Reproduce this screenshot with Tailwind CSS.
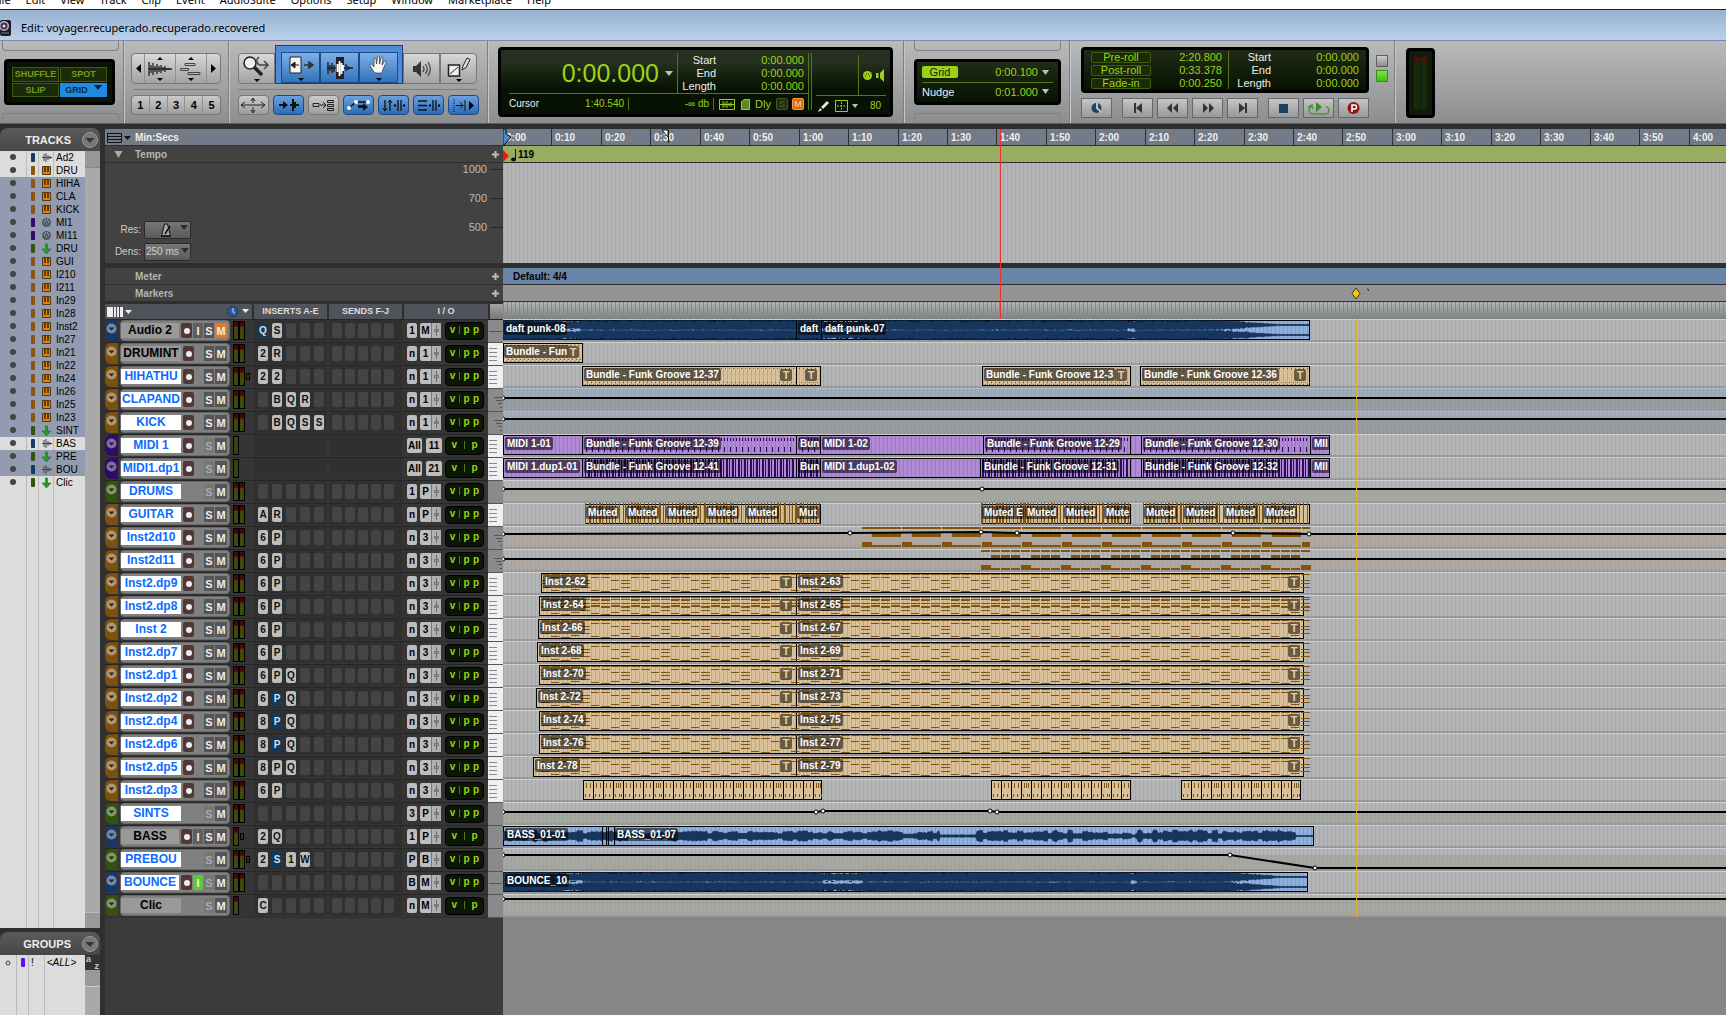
<!DOCTYPE html>
<html lang="en">
  <head>
    <meta charset="UTF-8" />
    <meta name="viewport" content="width=device-width, initial-scale=1.0" />
    <title>Edit: voyager.recuperado.recuperado.recovered</title>
    <script src="https://cdn.jsdelivr.net/npm/@tailwindcss/browser@4"></script>
  </head>

  <body class="flex flex-col min-h-screen overflow-x-hidden bg-[#2f2f2f] font-['Liberation_Sans',Arial,sans-serif] text-[10px] leading-3 text-black whitespace-nowrap">
    <!-- Menu bar -->
    <nav class="flex items-end gap-[15px] h-[10px] pb-px -ml-[7px] overflow-hidden bg-white border-b border-[#222] font-['Noto_Sans',sans-serif] text-[11px] leading-4">
      <a href="#">File</a><a href="#">Edit</a><a href="#">View</a><a href="#">Track</a><a href="#">Clip</a>
      <a href="#">Event</a><a href="#">AudioSuite</a><a href="#">Options</a><a href="#">Setup</a>
      <a href="#">Window</a><a href="#">Marketplace</a><a href="#">Help</a>
    </nav>

    <!-- Title bar -->
    <header class="flex items-center gap-[10px] h-[31px] pt-[6px] bg-linear-to-b from-[#98b1cf] to-[#b9d1ec] border-b border-[#8684a8] font-['Noto_Sans',sans-serif] text-[11px]">
      <svg width="11" height="16" viewBox="0 0 11 16"><rect width="11" height="16" rx="2" fill="#1d1a26"/><circle cx="4" cy="6" r="5" fill="#b9b4c8"/><circle cx="4" cy="6" r="3.500" fill="#3b3350"/><circle cx="4" cy="6" r="1.500" fill="#ddd"/><path d="M1 13h8" stroke="#777"/></svg>
      <h1>Edit: voyager.recuperado.recuperado.recovered</h1>
    </header>

    <!-- Toolbar -->
    <div class="flex h-[83px] bg-linear-to-b from-[#b9babc] to-[#8d8e90] border-b border-[#5b5b63]">
      <!-- Edit modes -->
      <section class="flex flex-col justify-between w-[124px] shrink-0 pl-0.5 pr-1 border-r border-[#7d7e80]">
        <div class="h-[10px] rounded-b border border-t-0 border-[#7f8082]"></div>
        <div class="grid grid-cols-2 gap-px h-[46px] ml-0.5 mr-1 p-[5px] rounded border-3 border-black bg-[#0b1404] text-[#6f9e1a] font-bold text-[9px]">
          <button class="border border-[#3f5c12] bg-[#1b2b08]">SHUFFLE</button>
          <button class="border border-[#3f5c12] bg-[#1b2b08]">SPOT</button>
          <button class="border border-[#3f5c12] bg-[#1b2b08]">SLIP</button>
          <button class="flex items-center justify-center gap-1.5 bg-[#1e8be0] text-[#0c2a4a]">GRID <svg class="mb-1" width="8" height="5"><path d="M0 0h8l-4 5z" fill="#0a1d33"/></svg></button>
        </div>
        <div class="h-[10px] rounded-t border border-b-0 border-[#7f8082]"></div>
      </section>

      <!-- Zoom presets -->
      <section class="w-[105px] shrink-0 pt-3 pl-[6px] pr-2 border-r border-[#7d7e80] border-l border-l-[#c6c7c9]">
        <div class="flex h-[31px] w-[90px] rounded-sm border border-[#77787a] bg-linear-to-b from-[#d8d8d8] to-[#a2a2a2] divide-x divide-[#909090]">
          <button class="grid place-items-center w-[13px]" aria-label="Zoom out"><svg width="5" height="9"><path d="M5 0v9L0 4.500z"/></svg></button>
          <button class="grid place-items-center w-[31px]" aria-label="Audio zoom"><svg width="24" height="24" viewBox="0 0 24 24"><path d="M12 0l3 3H9zM12 24l3-3H9z"/><path d="M1 5v14M3 8v8M5 6v12M7 9v6M9 7v10M11 9v6M13 8v8M15 10v4M17 9v6M19 11v2M21 11v2M1 12h23" stroke="#222" stroke-width="1.300"/></svg></button>
          <button class="grid place-items-center w-[31px]" aria-label="MIDI zoom"><svg width="24" height="24" viewBox="0 0 24 24"><path d="M12 0l3 3H9zM12 24l3-3H9z"/><path d="M6 6.500h10v2H6zM1.500 11.500h8v2h-8zM9 15.500h12v2H9z" fill="none" stroke="#444"/></svg></button>
          <button class="grid place-items-center w-[13px]" aria-label="Zoom in"><svg width="5" height="9"><path d="M0 0v9l5-4.500z"/></svg></button>
        </div>
        <div class="h-[6px] w-[86px] mx-0.5 border-b border-[#7d7e80]"></div>
        <div class="flex h-5 w-[90px] mt-[5px] rounded-sm border border-[#77787a] bg-linear-to-b from-[#cacaca] to-[#9e9e9e] divide-x divide-[#909090] font-bold text-[11px]">
          <button class="flex-1">1</button><button class="flex-1">2</button><button class="flex-1">3</button><button class="flex-1">4</button><button class="flex-1">5</button>
        </div>
      </section>

      <!-- Edit tools -->
      <section class="w-[259px] shrink-0 pt-1 pl-2 border-r border-[#7d7e80] border-l border-l-[#c6c7c9]">
        <div class="flex items-end h-[39px]">
          <button class="grid place-items-center w-[37px] h-[31px] rounded-l-sm border border-[#77787a] bg-linear-to-b from-[#d8d8d8] to-[#a2a2a2]" aria-label="Zoomer">
            <svg width="30" height="28" viewBox="0 0 30 28"><path d="M12 12l8 8" stroke="#222" stroke-width="3.500"/><circle cx="8" cy="8" r="6" fill="#eee" stroke="#222" stroke-width="1.500"/><path d="M17 2c-4 3-2 8 2 8h6M22 6l4 4-4 4" fill="none" stroke="#444" stroke-width="1.500"/><path d="M12 24h6l-3 3z"/></svg>
          </button>
          <div class="flex items-end w-[128px] h-[39px] pl-[5px] pr-1 border border-[#1d3f73] bg-[#4f8bd6]">
            <button class="grid place-items-center w-[39px] h-[31px] border border-[#1d4a86] bg-linear-to-b from-[#7db1ea] to-[#3072b8]" aria-label="Trim">
              <svg width="26" height="26" viewBox="0 0 26 26"><path d="M2 2h11v16H2z" fill="#f4f4f4" stroke="#222"/><path d="M11 10H6M7 7l-4 3 4 3z" fill="#222" stroke="#222"/><path d="M16 10h5M21 7l4 3-4 3z" fill="#333" stroke="#333" stroke-width="1.500"/><path d="M10 23h6l-3 3z"/></svg>
            </button>
            <button class="grid place-items-center w-[39px] h-[31px] border border-[#1d4a86] bg-linear-to-b from-[#7db1ea] to-[#3072b8]" aria-label="Selector">
              <svg width="26" height="24" viewBox="0 0 26 24"><path d="M9 1h8v22H9z" fill="#222"/><path d="M1 6v12M3 9v6M5 7v10M7 9v7M19 8v7M21 10v4M23 11v2M0 12h26" stroke="#222" stroke-width="1.400"/><path d="M10.500 8v8M12.500 5v15M14.500 7v11M16 9v6" stroke="#fff" stroke-width="1.800"/></svg>
            </button>
            <button class="grid place-items-center w-[39px] h-[31px] border border-[#1d4a86] bg-linear-to-b from-[#7db1ea] to-[#3072b8]" aria-label="Grabber">
              <svg width="20" height="26" viewBox="0 0 20 26"><path d="M5 17L1 10.500c-.5-1 1-2 2-1l2 2.500V4c0-1.500 2-1.500 2 0l.5 5L8.500 2c0-1.500 2-1.500 2 0v7l1.500-6c.3-1.400 2.200-1 2 .5L13 10l2.500-3.500c.8-1.200 2.300-.3 1.700 1L14 14l-1 4H6z" fill="#f6f6f6" stroke="#333" stroke-width=".7"/><path d="M7 23h6l-3 3z"/></svg>
            </button>
          </div>
          <button class="grid place-items-center w-[37px] h-[31px] border border-[#77787a] bg-linear-to-b from-[#d8d8d8] to-[#a2a2a2]" aria-label="Scrubber">
            <svg width="20" height="20" viewBox="0 0 20 20"><path d="M1 7h3l5-5v16l-5-5H1z" fill="#333"/><path d="M11 7q2 3 0 6M13.500 5q3.500 5 0 10M16 3q4.500 7 0 14" fill="none" stroke="#444" stroke-width="1.300"/></svg>
          </button>
          <button class="grid place-items-center w-[37px] h-[31px] rounded-r-sm border border-[#77787a] bg-linear-to-b from-[#d8d8d8] to-[#a2a2a2]" aria-label="Pencil">
            <svg width="26" height="26" viewBox="0 0 26 26"><path d="M2.500 9h11v11h-11z" fill="#eee" stroke="#222" stroke-width="1.500"/><path d="M4 18l8-7" stroke="#222"/><path d="M16 14l1-4 4-8 3 1.500-4 8z" fill="#ddd" stroke="#222"/><path d="M10 23h6l-3 3z"/></svg>
          </button>
        </div>
        <div class="h-[6px] w-[239px] border-b border-[#7d7e80]"></div>
        <div id="options" class="flex gap-1 mt-[5px]"></div>
      </section>

      <!-- Main counter -->
      <section class="w-[416px] shrink-0 pt-1.5 pl-[9px] border-r border-[#7d7e80] border-l border-l-[#c6c7c9]">
        <div class="flex w-[395px] h-[70px] px-1 pt-[3px] pb-1 rounded border-3 border-black bg-linear-to-b from-[#26301e] from-20% to-[#081203] to-60% text-[#9ad316]">
          <div class="flex flex-col w-[304px] border-r border-[#54761a] mr-0.5">
            <div class="flex h-[43px] ml-1 border-b border-[#54761a]">
              <div class="flex items-center justify-end gap-1.5 w-[169px] pr-1 border-r border-[#54761a] text-[25px]">
                <span>0:00.000</span><svg width="8" height="5"><path d="M0 0h8l-4 5z" fill="#b9c4b9"/></svg>
              </div>
              <dl class="grid grid-cols-[38px_1fr] flex-1 pr-1 text-right text-[11px] leading-[13px] content-center">
                <dt class="text-[#eee]">Start</dt><dd>0:00.000</dd>
                <dt class="text-[#eee]">End</dt><dd>0:00.000</dd>
                <dt class="text-[#eee]">Length</dt><dd>0:00.000</dd>
              </dl>
            </div>
            <div class="flex items-center flex-1 pt-1 pl-1">
              <span class="text-[#eee]">Cursor</span>
              <span class="w-[90px] pr-1 border-r border-[#54761a] text-right">1:40.540</span>
              <span class="w-[85px] pr-1 border-r border-[#54761a] text-right">-∞ db</span>
              <svg class="ml-[5px]" width="16" height="11"><path d="M.5.500h15v10H.5z" fill="none" stroke="#9ad316"/><path d="M1 5.500h14M4 2v7M6 3v5M8 2v7M10 4v3M12 3v5" stroke="#9ad316"/></svg>
              <svg class="ml-1.5" width="9" height="11"><path d="M3 0h6v11H0V3z" fill="#5f8a1c"/><path d="M3 .5h5.500v10H.5V3z" fill="none" stroke="#9ad316"/></svg>
              <span class="ml-[5px] text-[11px]">Dly</span>
              <button class="ml-[5px] w-3 h-3 rounded-xs border border-[#3e5a1a] bg-[#1f2e12] text-[9px] leading-[10px] text-[#47661e]">S</button>
              <button class="ml-1 w-3 h-3 rounded-xs border border-[#ff9a3a] bg-[#d96a0a] text-[9px] leading-[10px] text-[#ffd9a8]">M</button>
            </div>
          </div>
          <div class="flex flex-col flex-1 border-l border-[#54761a]">
            <div class="flex justify-end h-[43px] ml-1 border-b border-[#54761a]">
              <div class="flex items-center gap-1 w-7 h-10 pl-1 mt-0.5 border-l border-[#54761a]">
                <svg width="9" height="9"><circle cx="4.500" cy="4.500" r="4.500" fill="#9ad316"/><path d="M2 5h1M3 3h1M5 3h1M6 5h1" stroke="#12200a"/></svg>
                <svg width="8" height="13"><path d="M0 4h2.500v5H0zM4 4l4-4v13l-4-4z" fill="#9ad316"/></svg>
              </div>
            </div>
            <div class="flex items-center flex-1 pt-1 pl-1.5">
              <svg width="11" height="11"><path d="M0 11l2-4 2 2zM3 6l6-6 2 2-6 6z" fill="#e6e6e6"/></svg>
              <svg class="ml-1.5" width="13" height="12"><path d="M.5.500h12v11H.5z" fill="none" stroke="#9ad316"/><path d="M6.500 2v8M2 6h9" fill="none" stroke="#9ad316" stroke-dasharray="2 1"/></svg>
              <svg class="ml-1" width="6" height="4"><path d="M0 0h6l-3 4z" fill="#b9c4b9"/></svg>
              <span class="ml-3">80</span>
            </div>
          </div>
        </div>
      </section>

      <!-- Grid and nudge -->
      <section class="flex flex-col justify-between w-[166px] shrink-0 pl-[9px] pr-2 border-r border-[#7d7e80] border-l border-l-[#c6c7c9]">
        <div class="h-[10px] rounded-b border border-t-0 border-[#7f8082]"></div>
        <div class="h-[46px] px-[5px] py-1 rounded border-3 border-black bg-linear-to-b from-[#202b18] to-[#081203] text-[11px] text-[#9ad316]">
          <div class="flex items-center h-[17px] border-b border-[#54761a]">
            <button class="w-[36px] h-[12px] mb-1 rounded-xs bg-[#9ad316] leading-[11px] text-[#16250a]">Grid</button>
            <span class="flex-1 pr-1 mb-1 text-right">0:00.100</span><svg class="mb-1 mr-1" width="7" height="5"><path d="M0 0h7l-3.500 5z" fill="#b9c4b9"/></svg>
          </div>
          <div class="flex items-center h-[17px]">
            <span class="text-[#eee]">Nudge</span>
            <span class="flex-1 pr-1 text-right">0:01.000</span><svg class="mr-1" width="7" height="5"><path d="M0 0h7l-3.500 5z" fill="#b9c4b9"/></svg>
          </div>
        </div>
        <div class="h-[10px] rounded-t border border-b-0 border-[#7f8082]"></div>
      </section>

      <!-- Transport -->
      <section class="flex w-[325px] shrink-0 pt-1.5 pl-[10px] border-r border-[#7d7e80] border-l border-l-[#c6c7c9]">
        <div class="w-[288px]">
          <div class="flex h-[46px] px-[5px] py-px rounded border-3 border-black bg-linear-to-b from-[#202b18] to-[#081203] text-[11px] text-[#9ad316]">
            <div class="grid grid-cols-[60px_1fr] w-[140px] items-center gap-y-px pl-0.5 pr-1.5 text-right border-r border-[#54761a]">
              <button class="h-[11px] rounded-xs border border-[#3f5c12] bg-[#1b2b08] leading-[9px]">Pre-roll</button><span>2:20.800</span>
              <button class="h-[11px] rounded-xs border border-[#3f5c12] bg-[#1b2b08] leading-[9px]">Post-roll</button><span>0:33.378</span>
              <button class="h-[11px] rounded-xs border border-[#3f5c12] bg-[#1b2b08] leading-[9px]">Fade-in</button><span>0:00.250</span>
            </div>
            <dl class="grid grid-cols-[42px_1fr] flex-1 items-center pr-0.5 text-right">
              <dt class="text-[#eee]">Start</dt><dd>0:00.000</dd>
              <dt class="text-[#eee]">End</dt><dd>0:00.000</dd>
              <dt class="text-[#eee]">Length</dt><dd>0:00.000</dd>
            </dl>
          </div>
          <div id="transport" class="flex mt-[5px]"></div>
        </div>
        <div class="flex flex-col gap-[3px] pt-2 pl-[7px]">
          <button class="w-3 h-3 border border-[#5e5e5e] bg-linear-to-b from-[#ccc] to-[#8c8c8c]" aria-label="Count off"></button>
          <button class="w-3 h-3 border border-[#3c8a1c] bg-linear-to-b from-[#7ee04e] to-[#3fc000]" aria-label="Metronome"></button>
        </div>
      </section>

      <!-- Output meter -->
      <section class="flex-1 pt-[7px] pl-[10px] border-l border-[#c6c7c9]">
        <div class="flex justify-center gap-px w-[29px] h-[70px] py-1.5 rounded border-[3px] border-black bg-[#101a0c]">
          <div class="w-1.5 border-t-4 border-[#5a0a0a] bg-[#182a0c]"></div>
          <div class="w-1.5 border-t-4 border-[#5a0a0a] bg-[#182a0c]"></div>
        </div>
      </section>
    </div>

    <main class="flex flex-1">
      <!-- Track and group lists -->
      <aside class="flex flex-col w-[100px] shrink-0 pt-1">
        <div class="flex items-center justify-end gap-[11px] h-[23px] pr-0.5 rounded-t-lg bg-linear-to-b from-[#5b5b5b] to-[#474747] text-[11px] font-bold text-[#eee]">
          TRACKS
          <button aria-label="Tracks menu"><svg width="16" height="16"><circle cx="8" cy="8" r="7.500" fill="#777" stroke="#999"/><path d="M3.500 6h9L8 11z" fill="#333"/></svg></button>
        </div>
        <div class="flex h-[777px]">
          <ul id="trackList" class="w-[85px] bg-[linear-gradient(90deg,#dcdcdc_26px,#bbb_26px_27px,#dcdcdc_27px_38px,#bbb_38px_39px,#dcdcdc_39px_53px,#bbb_53px_54px,#dcdcdc_54px)]"></ul>
          <div class="flex flex-col justify-between flex-1 bg-[#a9a9a9]">
            <div class="h-[17px] bg-[#979797] border-b border-[#888]"></div>
            <div class="h-4 bg-[#999] border-t border-[#bbb]"></div>
          </div>
        </div>
        <div class="flex items-center justify-end gap-[11px] h-[23px] mt-1 pr-0.5 rounded-t-lg bg-linear-to-b from-[#5b5b5b] to-[#474747] text-[11px] font-bold text-[#eee]">
          GROUPS
          <button aria-label="Groups menu"><svg width="16" height="16"><circle cx="8" cy="8" r="7.500" fill="#777" stroke="#999"/><path d="M3.500 6h9L8 11z" fill="#333"/></svg></button>
        </div>
        <div class="flex flex-1">
          <div class="w-[85px] pt-px bg-[linear-gradient(90deg,#dcdcdc_16px,#bbb_16px_17px,#dcdcdc_17px_28px,#bbb_28px_29px,#dcdcdc_29px_44px,#bbb_44px_45px,#dcdcdc_45px)]">
            <div class="flex items-center h-[13px]">
              <svg width="31" height="11"><circle cx="8" cy="6" r="2" fill="none" stroke="#444"/><rect x="21" y="1" width="4" height="9" rx="1" fill="#5a10f0"/></svg>
              <span>!</span><span class="ml-[13px] italic">&lt;ALL&gt;</span>
            </div>
          </div>
          <div class="flex-1 bg-[#a9a9a9]">
            <button class="relative block w-full h-[15px] bg-[#333] text-[9px] leading-[8px] font-bold text-[#ccc]" aria-label="Sort groups"><span class="absolute left-px top-0">a</span><span class="absolute right-px bottom-0">z</span></button>
            <div class="h-[17px] bg-[#999] border-b border-[#ccc]"></div>
          </div>
        </div>
      </aside>

      <!-- Ruler headings and track controls -->
      <section class="flex flex-col w-[398px] shrink-0 ml-[5px] pt-[5px] font-bold">
        <div class="flex items-center h-4 mb-px pt-px pl-0.5 bg-[#727b87] text-[#eee]">
          <svg width="28" height="10"><path d="M.5.500h14v9H.5zM0 3.500h14M0 6.500h14" fill="none" stroke="#111"/><path d="M17 3h7l-3.500 4z" fill="#111"/></svg>Min:Secs
        </div>
        <div class="flex items-center h-4 mb-px pt-px pl-[9px] pr-1 bg-[#424242] text-[#b5b5b5]">
          <svg width="21" height="8"><path d="M.5 0h8l-4 7z" fill="#aaa"/></svg><span class="flex-1">Tempo</span>
          <svg width="7" height="7"><path d="M3.500 0v7M0 3.500h7" stroke="#bbb" stroke-width="2"/></svg>
        </div>
        <div class="relative h-[100px] mb-[5px] bg-[#424242] text-[#bbb] font-normal">
          <div class="absolute left-0 top-[58px] grid grid-cols-[36px_47px] gap-x-[3px] gap-y-1 items-center text-right text-[#ccc]">
            <span>Res:</span>
            <button class="flex items-center justify-end gap-2 h-[18px] pr-0.5 rounded-xs border border-[#2a2a2a] bg-linear-to-b from-[#777] to-[#5a5a5a]" aria-label="Tempo resolution"><svg width="12" height="14"><path d="M4.500 1h3l3 12h-9z" fill="#aaa" stroke="#111"/><path d="M5 11l5-8M1 13h10" fill="none" stroke="#111" stroke-width="1.500"/></svg><svg class="mb-1.5" width="8" height="5"><path d="M0 0h8l-4 5z" fill="#2c2c2c"/></svg></button>
            <label for="dens">Dens:</label>
            <div class="relative">
              <select id="dens" class="block w-full h-[18px] pl-px appearance-none rounded-xs border border-[#2a2a2a] bg-linear-to-b from-[#777] to-[#5a5a5a] text-[#ccc]"><option>250 ms</option></select>
              <svg class="absolute right-0.5 top-[5px] pointer-events-none" width="8" height="5"><path d="M0 0h8l-4 5z" fill="#2c2c2c"/></svg>
            </div>
          </div>
          <div class="absolute right-0 top-0 flex flex-col items-end gap-[17px] text-[11px]">
            <span class="flex items-center gap-1">1000<i class="w-3 h-px bg-[#222]"></i></span>
            <span class="flex items-center gap-1">700<i class="w-3 h-px bg-[#222]"></i></span>
            <span class="flex items-center gap-1">500<i class="w-3 h-px bg-[#222]"></i></span>
          </div>
        </div>
        <div class="flex items-center h-4 mb-px pt-px pl-[30px] pr-1 bg-[#424242] text-[#b5b5b5]"><span class="flex-1">Meter</span><svg width="7" height="7"><path d="M3.500 0v7M0 3.500h7" stroke="#bbb" stroke-width="2"/></svg></div>
        <div class="flex items-center h-4 mb-[3px] pt-px pl-[30px] pr-1 bg-[#424242] text-[#b5b5b5]"><span class="flex-1">Markers</span><svg width="7" height="7"><path d="M3.500 0v7M0 3.500h7" stroke="#bbb" stroke-width="2"/></svg></div>
        <div class="flex gap-0.5 h-[15px] text-[9px] text-center text-[#ddd]">
          <div class="flex items-center justify-between w-[147px] px-0.5 bg-[#50545a]">
            <svg width="25" height="10"><path d="M0 0h16v10H0z" fill="#eee"/><path d="M6.500 0v10M9.500 0v10M12.500 0v10" stroke="#444"/><path d="M18 3h7l-3.500 4z" fill="#eee"/></svg>
            <svg width="23" height="11"><circle cx="6" cy="5.500" r="5" fill="#2f5c9e" stroke="#16305a"/><path d="M6 2v4l2 1.500" fill="none" stroke="#ddd"/><path d="M15 3h7l-3.500 4z" fill="#eee"/></svg>
          </div>
          <div class="w-[73px] pt-px bg-[#50545a]">INSERTS A-E</div>
          <div class="w-[73px] pt-px bg-[#50545a]">SENDS F-J</div>
          <div class="w-[84px] pt-px bg-[#50545a]">I / O</div>
          <div class="flex-1 bg-linear-to-b from-[#a5a5a5] to-[#777]"></div>
        </div>
        <div id="strips"></div>
        <div class="flex-1 mt-px rounded-tl bg-[#3b3b3b]"></div>
      </section>

      <!-- Timeline -->
      <section class="relative flex flex-col flex-1 min-w-0 overflow-hidden pt-[5px] font-bold">
        <div id="ruler" class="relative h-4 mb-px bg-[#727b87] text-[#eee]"></div>
        <div class="flex items-center h-4 mb-px pt-px bg-[#98ad62]">
          <svg width="13" height="16"><path d="M0 3l6 6-6 6z" fill="#f01c00"/><path d="M12.500 2v10" stroke="#111"/><ellipse cx="10.500" cy="12.500" rx="2.500" ry="2" fill="#111"/></svg><span class="ml-0.5">119</span>
        </div>
        <div class="h-[100px] mb-[5px] bg-[repeating-linear-gradient(90deg,#a0abaf_0_1px,#b4b5b7_1px_4px)]"></div>
        <div class="h-4 mb-px pt-[3px] pl-[10px] bg-[#6884a6]">Default: 4/4</div>
        <div class="relative h-4 mb-px bg-[#949494]">
          <svg class="absolute left-[848px] top-[3px]" width="18" height="11"><path d="M5 0l4 5.500-4 5.500-4-5.500z" fill="#ffc400" stroke="#333"/><path d="M16 1l2 1v1" stroke="#222" fill="none"/></svg>
        </div>
        <div class="h-[17px] bg-[repeating-linear-gradient(90deg,#7b8b92_0_1px,transparent_1px_4px),linear-gradient(#b0b2b4,#7e8182)]"></div>
        <div id="lanes" class="bg-[repeating-linear-gradient(90deg,#a0abaf_0_1px,#b4b5b7_1px_4px)]"></div>
        <div class="flex-1 bg-[#868686]"></div>
        <div class="absolute left-[497px] top-[5px] w-px h-[190px] bg-[#f03028]"></div>
        <div class="absolute left-[853px] top-[195px] w-px h-[598px] bg-[#e0b030]"></div>
      </section>
    </main>

    <script>
      const COLORS = {
        blue: "bg-[#183766]", brown: "bg-[#7d500f]", purple: "bg-[#300a66]", green: "bg-[#33510f]",
      };
      const I = (name, short, ins, io, extra) =>
        Object.assign({ name, short, color: "brown", type: "inst", ins, io, sel: true, keys: "midi" }, extra);

      // ins: one character per insert slot, lower case means bypassed/blue
      const tracks = [
        I("Audio 2", "Ad2", "qS", "1M", { color: "blue", type: "audio", sel: false, keys: "line", mon: true, muted: true }),
        I("DRUMINT", "DRU", "2R", "n1", { sel: false }),
        I("HIHATHU", "HIHA", "22", "n1", { clip: "ml-px" }),
        I("CLAPAND", "CLA", " BQR", "n1", { keys: "auto" }),
        I("KICK", "KICK", " BQSS", "n1", { keys: "auto" }),
        I("MIDI 1", "MI1", null, "11", { color: "purple", type: "midi" }),
        I("MIDI1.dp1", "MI11", null, "21", { color: "purple", type: "midi" }),
        I("DRUMS", "DRU", "", "1P", { color: "green", type: "aux", keys: "" }),
        I("GUITAR", "GUI", "AR", "nP"),
        I("Inst2d10", "I210", "6P", "n3", { keys: "auto" }),
        I("Inst2d11", "I211", "6P", "n3", { keys: "auto" }),
        I("Inst2.dp9", "In29", "6P", "n3"),
        I("Inst2.dp8", "In28", "6P", "n3"),
        I("Inst 2", "Inst2", "6P", "n3"),
        I("Inst2.dp7", "In27", "6P", "n3"),
        I("Inst2.dp1", "In21", "6PQ", "n3"),
        I("Inst2.dp2", "In22", "6pQ", "n3"),
        I("Inst2.dp4", "In24", "8pQ", "n3"),
        I("Inst2.dp6", "In26", "8pQ", "n3"),
        I("Inst2.dp5", "In25", "8PQ", "n3"),
        I("Inst2.dp3", "In23", "6P", "n3"),
        I("SINTS", "SINT", "", "3P", { color: "green", type: "aux", keys: "" }),
        I("BASS", "BAS", "2Q", "1P", { color: "blue", type: "audio", sel: false, keys: "", mon: true, mono: true, clip: "ml-px" }),
        I("PREBOU", "PRE", "2s1W", "PB", { color: "green", type: "aux", keys: "", clip: "ml-px" }),
        I("BOUNCE", "BOU", "", "BM", { color: "blue", type: "audio", keys: "line", mon: true, monOn: true }),
        I("Clic", "Clic", "C", "nM", { color: "green", type: "aux", sel: false, keys: "", mono: true }),
      ];

      const TYPE_ICONS = {
        audio: '<path d="M0 5.500h10M2 2v7M4 1v9M6 3v5M8 4v3" stroke="#444"/>',
        inst: '<path d="M.5 1.500h8v8h-8z" fill="#e08010" stroke="#553a10"/><path d="M3 2v5M6 2v5" stroke="#3a2400" stroke-width="1.500"/>',
        midi: '<circle cx="4.500" cy="5.500" r="4.500" fill="#4e5a68"/><path d="M2 5h1M3 3h1M5 3h1M6 5h1M4 7h1" stroke="#ccc"/>',
        aux: '<path d="M3.500 1h2v5H9l-4.500 5L0 6h3.500z" fill="#1fa01f" stroke="#136013" stroke-width=".5"/>',
      };

      document.getElementById("trackList").innerHTML = tracks.map((t) => `
        <li class="flex items-center h-[13px] ${t.sel ? "bg-[#929bb0]" : ""}">
          <svg width="42" height="13"><circle cx="13" cy="6" r="3" fill="#444"/><rect x="31" y="2" width="4" height="9" rx="1" fill="${{ blue: "#183766", brown: "#8a5510", purple: "#35086e", green: "#33510f" }[t.color]}"/></svg>
          <svg width="14" height="11">${TYPE_ICONS[t.type]}</svg>${t.short}
        </li>`).join("");

      // ---- Toolbar option buttons ----
      const options = [
        [0, '<path d="M2 9h24M14 3v4M14 11v5" stroke="#222"/><path d="M6 6L2 9l4 3M22 6l4 3-4 3M12 5l2-3 2 3M12 14l2 3 2-3" fill="none" stroke="#222"/>'],
        [1, '<path d="M5 9h5M16 9h9M19 3v12M21 6v6" stroke="#111" stroke-width="2"/><path d="M9 5l5 4-5 4zM15 6v6" fill="#111"/>'],
        [0, '<path d="M4 7.500h6v3H4z" fill="none" stroke="#222"/><path d="M18.500 4.500h6v2h-6zM18.500 8.500h6v2h-6zM18.500 12.500h6v2h-6z" fill="none" stroke="#222"/><path d="M11 9h6M14 6l3 3-3 3" stroke="#222" fill="none"/>'],
        [1, '<path d="M5 12l7-6h12" stroke="#111" stroke-width="1.500" fill="none"/><circle cx="5" cy="12" r="2" fill="#fff"/><circle cx="12" cy="6" r="2" fill="#fff"/><circle cx="24" cy="6" r="2" fill="#fff"/><path d="M14 9h5V7l5 4-5 4v-3h-5z" fill="#111"/>'],
        [1, '<path d="M6 4v11M11 4v11M19 4v11M22 4v11" stroke="#111" stroke-width="1.300"/><path d="M4 12l2 3 2-3M9 7l2-3 2 3" fill="none" stroke="#111"/><path d="M15 8.500h2v2h-2zM24 8.500h2v2h-2z"/>'],
        [1, '<path d="M4 5h9M4 9.500h9M4 14h9M19 4v11M22 4v11" stroke="#111" stroke-width="1.300"/><path d="M15 8.500h2v2h-2zM24 8.500h2v2h-2z"/>'],
        [1, '<path d="M5 3v13" stroke="#111" stroke-dasharray="1 1"/><path d="M7 9.500h7M11 6.500l3 3-3 3M16 4v11" stroke="#111" fill="none"/><path d="M20 5l5 4.500-5 4.500z"/>'],
      ];
      document.getElementById("options").innerHTML = options.map(([on, icon]) => `
        <button class="w-[31px] h-5 rounded-sm border ${on ? "border-[#1d4a86] bg-linear-to-b from-[#6aa2e0] to-[#2a6cb4]" : "border-[#77787a] bg-linear-to-b from-[#cacaca] to-[#9e9e9e]"}"><svg width="29" height="18">${icon}</svg></button>`).join("");

      const transport = [
        ["mr-[10px]", '<circle cx="14.500" cy="9" r="5" fill="#23405c"/><path d="M15 3v6l4 4" stroke="#b8c0c8" stroke-width="2" fill="none"/>'],
        ["mr-1", '<path d="M12 4v10" stroke="#333" stroke-width="2"/><path d="M19 4v10l-6-5z" fill="#333"/>'],
        ["mr-1", '<path d="M14 4v10l-5-5zM20 4v10l-5-5z" fill="#333"/>'],
        ["mr-1", '<path d="M10 4v10l5-5zM16 4v10l5-5z" fill="#333"/>'],
        ["mr-[10px]", '<path d="M18 4v10" stroke="#333" stroke-width="2"/><path d="M11 4v10l6-5z" fill="#333"/>'],
        ["mr-1", '<path d="M10 5h9v9h-9z" fill="#1d3f5e"/>'],
        ["mr-1", '<path d="M8 7c-4 2-4 8 1 8h12c5 0 5-7 1-7M4 8l4-2 1 4" fill="none" stroke="#4a9a3a" stroke-width="1.500"/><path d="M12 3v10l6-5z" fill="#3a8a2a"/>'],
        ["", '<circle cx="14.500" cy="9" r="6" fill="#8c1a1a"/><path d="M13 13V6h2.500q2 0 2 2t-2 2H13" fill="none" stroke="#fff" stroke-width="1.500"/>'],
      ];
      document.getElementById("transport").innerHTML = transport.map(([gap, icon]) => `
        <button class="w-[31px] h-5 shrink-0 ${gap} border border-[#66676a] bg-linear-to-b from-[#c6c6c6] to-[#999]"><svg width="29" height="18">${icon}</svg></button>`).join("");

      // ---- Track control strips ----
      const slot = (c) => {
        if (!c || c === " ") return '<i class="w-[10px] h-[15px] rounded-xs bg-[#444]"></i>';
        const blue = c !== c.toUpperCase();
        return `<button class="w-[10px] h-[15px] rounded-xs ${blue ? "bg-[#0f3a5e] text-[#ddd]" : "bg-[#bdbdbd] text-[#111]"}">${c.toUpperCase()}</button>`;
      };
      const fader = '<svg width="9" height="15"><path d="M4.500 2v11M2.500 6.500h4v2h-4z" fill="none" stroke="#6e6e6e"/></svg>';
      const keys = {
        midi: '<path d="M0 0h15v23H0z" fill="#f0f0f0"/><path d="M1 5.500h8M1 9.500h8M1 13.500h8M1 17.500h8" stroke="#888"/>',
        auto: '<path d="M6 8.500h8M8 11.500h6M10 14.500h4M12 18.500h2" stroke="#555"/>',
        line: '<path d="M1 11.500h13" stroke="#555"/>',
        "": "",
      };
      document.getElementById("strips").innerHTML = tracks.map((t) => {
        const aux = t.type === "aux", midi = t.type === "midi";
        const dimSolo = aux || midi || t.monOn;
        const meter = `<i class="w-1.5 h-[19px] border border-black ${midi ? "bg-[#34440a]" : "bg-linear-to-b from-[#480606] from-25% via-[#4a3f08] via-30% to-[#34500a]"}"></i>`;
        const bar = '<i class="w-px h-2 bg-[#54761a]"></i>';
        const vpp = t.mono || midi ? `<span>v</span>${bar}<span>p</span>` : `<span>v</span>${bar}<span>p</span><span>p</span>`;
        return `
        <div class="flex h-[23px] bg-[#353535] border-t border-[#262626]">
          <button class="w-[13px] h-[21px] pl-px mr-0.5 rounded-l-md ${COLORS[t.color]}" aria-label="Playlists"><svg class="mb-1" width="11" height="11"><circle cx="5.500" cy="5.500" r="5" fill="#fff" opacity=".4"/><path d="M2.500 4.500h6l-3 3z" fill="#222"/></svg></button>
          <div class="flex items-center w-[110px] h-[21px] pr-px rounded-sm bg-[#808080] border border-[#696969]">
            <button class="w-[60px] h-[15px] text-xs leading-[15px] ${t.sel ? "bg-white text-[#0a6cff]" : "bg-[#999] text-black"}">${t.name}</button>
            <div class="flex flex-1 items-center justify-end gap-px pl-0.5 pr-px text-[11px] text-[#eee]">
              ${aux ? "" : '<button class="w-[11px] h-[15px] mr-auto rounded-xs bg-[#553636] grid place-items-center" aria-label="Record"><i class="w-1.5 h-1.5 rounded-full bg-[#eee]"></i></button>'}
              ${t.mon ? `<button class="w-[10px] h-[15px] ${t.monOn ? "bg-[#5cc838]" : "bg-[#5e5e5e]"}">I</button>` : ""}
              <button class="w-[10px] h-[15px] ${dimSolo ? "bg-[#777] text-[#aaa]" : "bg-[#555]"}">S</button>
              <button class="w-[12px] h-[15px] ${t.muted ? "bg-[#e07a28]" : "bg-[#555]"}">M</button>
            </div>
          </div>
          <div class="flex w-[24px] pl-[3px] pt-px">${meter}${t.mono || midi ? "" : meter}${t.clip ? `<i class="${t.clip} mt-1.5 w-1 h-[7px] border border-black bg-[#4a2a08]"></i>` : ""}</div>
          <div class="flex items-center gap-1 w-[73px] h-[21px] pl-1 mr-0.5 bg-[#303030]">${t.ins === null ? "" : [0, 1, 2, 3, 4].map((i) => slot(t.ins[i])).join("")}</div>
          <div class="flex items-center gap-[3px] w-[73px] h-[21px] pl-[3px] mr-0.5 bg-[#303030]">${t.ins === null ? "" : [0, 1, 2, 3, 4].map(() => slot("")).join("")}</div>
          <div class="flex items-center w-[84px] h-[21px] pl-[3px]">
            ${midi
              ? `<button class="w-[15px] h-[15px] mr-1 rounded-xs bg-[#bdbdbd]">All</button><button class="w-[16px] h-[15px] mr-[3px] rounded-xs bg-[#bdbdbd]">${t.io}</button>`
              : `<button class="w-[10px] h-[15px] mr-[3px] rounded-xs bg-[#bdbdbd]">${t.io[0]}</button><button class="w-[11px] h-[15px] rounded-l-xs bg-[#bdbdbd]">${t.io[1]}</button><button class="w-[10px] h-[15px] mr-1 border-l border-[#777] bg-[#b0b0b0]" aria-label="Volume">${fader}</button>`}
            <button class="flex items-center justify-around w-[39px] h-[18px] pb-0.5 px-0.5 rounded-sm border border-black bg-[#0c1606] text-[10px] leading-[11px] text-[#9ad316]">${vpp}</button>
          </div>
          <svg class="bg-[#8a8a8a]" width="15" height="23">${keys[t.keys]}<path d="M0 22.500h15" stroke="#555"/></svg>
        </div>`;
      }).join("");

      // ---- Ruler ----
      document.getElementById("ruler").innerHTML = Array.from({ length: 25 }, (_, i) => {
        const x = Math.round(i * 49.44) - (i ? 1 : 0);
        return `<span class="absolute top-0 h-4 pl-[3px] pt-[3px] ${i ? "border-l border-[#2f2f2f]" : ""}" style="left:${x}px">${Math.floor(i / 6)}:${i % 6}0</span>`;
      }).join("") + '<svg class="absolute left-0 top-0" width="170" height="16"><path d="M0 0h3v5l5 3-7 8H0z" fill="#4a8ad4" stroke="#111"/><path d="M159 1h6v7z" fill="#fff" stroke="#111"/><path d="M165.500 1v13" stroke="#111"/></svg>';

      // ---- Lanes: x values are pixels from the start of the timeline ----
      let seed = 7;
      const rnd = () => (seed = (seed * 16807) % 2147483647) / 2147483647;
      const BROWN = "#80530f";
      const rect = (x, y, w, h, fill) => `<rect x="${x}" y="${y}" width="${w}" height="${h}" fill="${fill}"/>`;
      const clip = (x0, x1, fill) =>
        `<rect x="${x0 + 0.5}" y="1.5" width="${x1 - x0}" height="19" fill="${fill}" stroke="#000"/>` +
        Array.from({ length: Math.floor((x1 - x0) / 4) }, (_, i) => `<path d="M${x0 + 4 - (x0 % 4) + i * 4 + 0.5} 2v18" stroke="#000" stroke-opacity=".12"/>`).join("");
      const label = (x, w, text) =>
        `<span class="absolute top-[3px] h-[13px] pt-px px-0.5 overflow-hidden rounded-xs bg-black/55 text-white" style="left:${x + 1}px;max-width:${w - 2}px">${text}</span>`;
      const badge = (x) => `<span class="absolute top-1 w-3 h-3 rounded-xs bg-[#5e5138]/90 text-center text-[11px] text-[#e0d0b0]" style="left:${x}px">T</span>`;

      function wave(x0, x1, mid, amp) {
        let top = "", bottom = "";
        for (let x = x0; x <= x1; x += 1) {
          const a = Math.max(0.5, amp(x));
          top += `L${x} ${(mid - a).toFixed(1)}`;
          bottom = `L${x} ${(mid + a).toFixed(1)}` + bottom;
        }
        return `<path d="M${x0} ${mid}${top}${bottom}z" fill="#17365f" stroke="#0d2342" stroke-width=".6"/>`;
      }

      function autoLane(y, color, points, extra) {
        const pts = (points || [[0, y]]).map(([px, py]) => [px, py + 1]);
        const line = pts.map((p) => p.join(" ")).join("L") + `L1400 ${pts[pts.length - 1][1]}`;
        return `<path d="M0 ${y + 1}H1400V21H0z" fill="${color}" fill-opacity=".6"/>${extra || ""}<path d="M${line}" fill="none" stroke="#000" stroke-width="2"/>` +
          pts.map((p) => `<circle cx="${p[0]}" cy="${p[1]}" r="2" fill="#fff" stroke="#000"/>`).join("");
      }

      function instClips(start, a, b, dense) {
        let s = clip(start, 293, "#d8c09a") + clip(293, 800, "#d8c09a");
        for (let x = -2, k = 3; x < 806; x += 10, k++) {
          if (x < start) continue;
          const ys = [[4, 17], [4, 18], [7, 16], [7, 10, 14]][k % 4];
          s += rect(x, 2, 9, 1, BROWN);
          for (const y of ys) s += rect(x, y + 1, 8 + (k % 2), 1, BROWN);
          if (dense) s += rect(x, 4, 9, 1, BROWN) + rect(x, 8, 9, 1, BROWN) + rect(x, 10 + (k % 2), 9, 2, BROWN);
        }
        return [s, label(start + 1, 60, a) + label(294, 60, b) + badge(277) + badge(785)];
      }

      function hat(x0, x1) {
        let s = clip(x0, x1, "#d8c09a");
        for (let x = x0 + 3; x < x1 - 1; x += 4) s += rect(x, 3, 1, 1, BROWN) + rect(x + 2, 17, 1, 1, BROWN) + rect(x, 19, 1, 1, BROWN);
        return s;
      }
      function midiA(x0, x1) {
        let s = "";
        for (let x = x0 + 3; x < x1 - 1; x += 3) s += rect(x, 4, 1, 3, "#2c0a5c") + (x % 2 ? rect(x, 13, 1, 5, "#2c0a5c") : "");
        return s;
      }
      function midiB(x0, x1) {
        let s = "";
        for (let x = x0 + 2; x < x1 - 1; x += 3) s += rect(x, 1, x % 2 ? 2 : 1, 19, "#2c0a5c");
        return s;
      }
      function guitar(x0, x1) {
        let s = clip(x0, x1, "#d8c09a");
        for (let x = x0; x < x1; x += 3 + Math.floor(rnd() * 2)) s += rect(x, 0, rnd() > 0.7 ? 2 : 1, 21, BROWN);
        return s;
      }
      function slices(x0, x1) {
        let s = "", k = 0;
        for (let x = x0; x < x1 - 3; x += 10, k++) {
          const w = Math.min(10, x1 - x);
          s += rect(x, 1, w, 20, "#d8c09a") + `<rect x="${x + 0.5}" y="1.5" width="${w}" height="19" fill="none" stroke="#000"/>`;
          s += rect(x + 3, 4, 1, 5, BROWN) + rect(x + 7, 4, 1, 5, BROWN) + rect(x + 2, 15, 1, 3, BROWN) + rect(x + 6, 15, 1, 3, BROWN);
          if (k % 4 === 3) s += rect(x + 5, 4, 1, 5, BROWN) + rect(x + 8, 15, 1, 3, BROWN);
        }
        return s;
      }
      const stereo = (end, fadeFrom, fadeTo, quiet) => {
        const amp = (x) => {
          let a = 4.6 - (rnd() > 0.75 ? rnd() * 0.9 : 0);
          if (quiet.some(([p, q]) => x >= p && x < q)) a -= 1 + rnd();
          if (x > fadeFrom) a *= Math.max(0, (fadeTo - x) / (fadeTo - fadeFrom)) * (0.7 + rnd() * 0.5);
          return Math.min(a, 4.6);
        };
        let specks = "";
        for (let x = 4; x < fadeFrom; x += 3) {
          if (rnd() > 0.6) specks += rect(x, 2, 2, 1, "#0a1830");
          if (rnd() > 0.7) specks += rect(x, 10, 3, 1, "#17365f");
          if (rnd() > 0.6) specks += rect(x, 19, 2, 1, "#0a1830");
        }
        return wave(0, end, 6, amp) + wave(0, end, 16, amp) + specks;
      };

      const PURPLE = "#b08ad4", LIGHT = "#8fb0de";
      const lanes = [];
      lanes[0] = [clip(0, 293, LIGHT) + clip(293, 318, LIGHT) + clip(318, 806, LIGHT) + stereo(806, 715, 785, [[60, 78], [319, 357], [625, 633]]) + '<path d="M293.500 1v20M318.500 1v20" stroke="#000"/>',
        label(0, 90, "daft punk-08") + label(294, 26, "daft") + label(319, 90, "daft punk-07")];
      lanes[1] = [hat(0, 79), label(0, 67, "Bundle - Fun") + badge(64)];
      lanes[2] = [hat(79, 293) + hat(293, 317) + hat(479, 627) + hat(637, 806),
        label(80, 150, "Bundle - Funk Groove 12-37") + badge(277) + badge(302) + label(480, 138, "Bundle - Funk Groove 12-3") + badge(612) + label(638, 150, "Bundle - Funk Groove 12-36") + badge(791)];
      lanes[3] = [autoLane(9, "#858d92", null, rect(0, 0, 1400, 9, "#7f9fbd66")), ""];
      lanes[4] = [autoLane(7, "#858d92", null, rect(0, 0, 1400, 7, "#7f9fbd66")), ""];
      const midiClips = (g) => [[0, 79], [79, 293], [293, 317], [317, g], [g, 627], [627, 638], [638, 807], [807, 826]].map(([a, b]) => clip(a, b, PURPLE)).join("");
      lanes[5] = [midiClips(480) + midiA(80, 293) + midiA(293, 317) + midiA(480, 627) + midiA(638, 807),
        label(1, 78, "MIDI 1-01") + label(80, 150, "Bundle - Funk Groove 12-39") + label(294, 24, "Bun") + label(318, 90, "MIDI 1-02") + label(481, 146, "Bundle - Funk Groove 12-29") + label(639, 150, "Bundle - Funk Groove 12-30") + label(808, 20, "MII")];
      lanes[6] = [midiClips(477) + midiB(80, 293) + midiB(293, 317) + midiB(477, 627) + midiB(638, 807),
        label(1, 80, "MIDI 1.dup1-01") + label(80, 150, "Bundle - Funk Groove 12-41") + label(294, 24, "Bun") + label(318, 90, "MIDI 1.dup1-02") + label(478, 146, "Bundle - Funk Groove 12-31") + label(639, 150, "Bundle - Funk Groove 12-32") + label(808, 20, "MII")];
      lanes[7] = [autoLane(8, "#9aa092", [[0, 8], [479, 8]], ""), ""];
      const gtr = [[82, 122, "Muted"], [122, 162, "Muted"], [162, 202, "Muted"], [202, 242, "Muted"], [242, 282, "Muted"], [282, 293], [293, 317, "Mut"], [478, 521, "Muted E"], [521, 560, "Muted"], [560, 600, "Muted"], [600, 627, "Mute"], [640, 680, "Muted"], [680, 720, "Muted"], [720, 760, "Muted"], [760, 800, "Muted"], [800, 806]];
      lanes[8] = [gtr.map(([a, b]) => guitar(a, b)).join(""),
        gtr.map(([a, b, text]) => (text ? label(a, b - a + 1, text) : "")).join("")];
      let n9 = "", n10 = "";
      for (let x = 359; x < 807; x += 40) {
        const end = Math.min(39, 807 - x);
        n9 += rect(x, 1, end, 2, BROWN) + rect(x, 16, Math.min(10, end), 5, BROWN);
        if (end > 10) n9 += rect(x + 10, 19, end - 10, 2, BROWN) + rect(x + 10, 6, end - 10, 5, BROWN);
        if (x > 470) for (let k = 0; k < 4 && x + k * 10 < 800; k++) n10 += rect(x + k * 10 - 1, 1, 9, 2, BROWN) + (k ? rect(x + k * 10 - 1, 6, 9, 5, BROWN) + rect(x + k * 10 - 1, 19, 9, 2, BROWN) : rect(x - 1, 16, 10, 5, BROWN));
      }
      lanes[9] = [autoLane(7, "#aca094", [[0, 7], [347, 6], [478, 5], [514, 6], [730, 6], [806, 7]], n9), ""];
      lanes[10] = [autoLane(9, "#aca094", null, n10), ""];
      [38, 36, 35, 34, 36, 33, 36, 36, 30].forEach((x, i) => {
        lanes.push(instClips(x, `Inst 2-${62 + i * 2}`, `Inst 2-${63 + i * 2}`, i === 1));
      });
      lanes[20] = [slices(80, 318) + slices(488, 627) + slices(678, 797), ""];
      lanes[21] = [autoLane(9, "#9aa092", [[0, 9], [313, 9], [320, 8], [487, 8], [494, 9]], ""), ""];
      let env = 3;
      const bassAmp = (x) => {
        if (x > 792) return 0.4;
        if ((x > 436 && x < 474) || (x > 628 && x < 633)) return 0.8 + rnd() * 0.5;
        if (x % 5 === 0) env = 2 + rnd() * (x > 474 ? 4.2 : 3.4);
        return env * (0.75 + rnd() * 0.35);
      };
      lanes[22] = [clip(0, 810, LIGHT) + wave(0, 810, 11, bassAmp) + '<path d="M99.500 1v20M103.500 1v20M105.500 1v20M111.500 1v20" stroke="#000"/>', label(1, 90, "BASS_01-01") + label(111, 90, "BASS_01-07")];
      lanes[23] = [autoLane(6, "#9aa092", [[0, 6], [727, 6], [812, 19]], ""), ""];
      lanes[24] = [clip(0, 804, LIGHT) + stereo(804, 725, 785, [[60, 80], [320, 360], [628, 634]]), label(1, 90, "BOUNCE_10")];
      lanes[25] = [autoLane(4, "#9aa092", null, ""), ""];

      document.getElementById("lanes").innerHTML = lanes.map(([art, labels]) => `
        <div class="relative h-[23px] overflow-hidden">
          <svg class="absolute inset-0 w-full h-full"><path d="M0 .5h1400" stroke="#cfcfcf"/><path d="M0 22h1400" stroke="#828282"/>${art}</svg>${labels}
        </div>`).join("");
    </script>
  </body>
</html>
